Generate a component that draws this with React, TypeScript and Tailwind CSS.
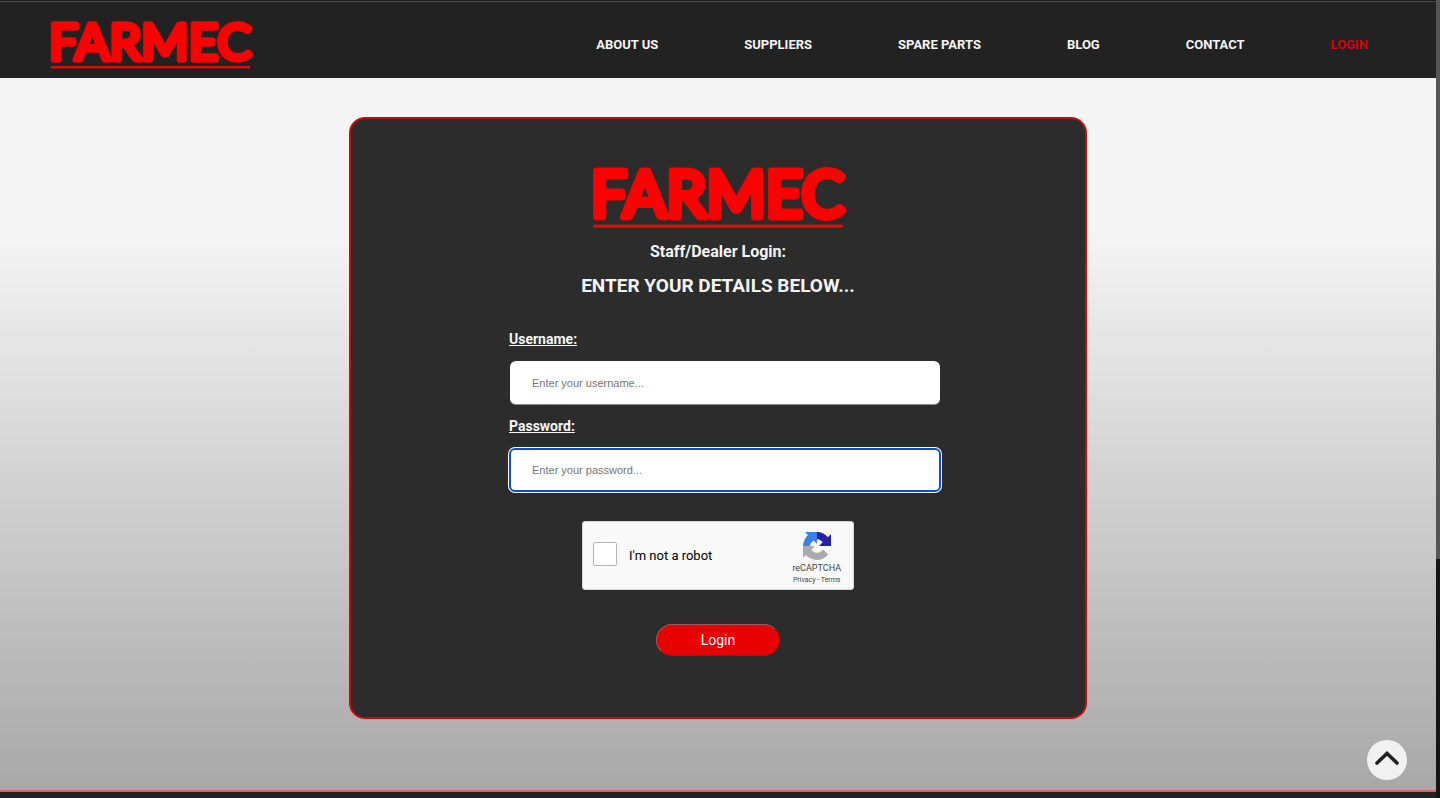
import React from "react";

const navItems = [
  { label: "ABOUT US", href: "#about" },
  { label: "SUPPLIERS", href: "#suppliers" },
  { label: "SPARE PARTS", href: "#spare-parts" },
  { label: "BLOG", href: "#blog" },
  { label: "CONTACT", href: "#contact" },
  { label: "LOGIN", href: "#login", active: true },
];

function Logo({ className }: { className: string }) {
  return (
    <svg viewBox="0 0 201 49" className={`overflow-visible ${className}`} role="img" aria-label="Farmec">
      <text
        x="-1"
        y="40"
        fontSize="51"
        fontWeight="400"
        fill="#fe0000"
        stroke="#fe0000"
        strokeWidth="5.6"
        strokeLinejoin="round"
        strokeLinecap="round"
        className="font-['Lato',sans-serif]"
      >
        FARMEC
      </text>
      <rect x="1" y="46" width="199" height="2.4" fill="#e60a0a" />
    </svg>
  );
}

function RecaptchaMark() {
  return (
    <svg viewBox="0 0 64 64" className="size-7" aria-hidden="true">
      <path
        fill="#2420a8"
        d="M64 31.955l-.033-1.37V4.687l-7.16 7.16C50.948 4.674 42.033.093 32.05.093c-10.4 0-19.622 4.96-25.458 12.64l11.736 11.86a15.55 15.55 0 0 1 4.754-5.334c2.05-1.6 4.952-2.906 8.968-2.906.485 0 .86.057 1.135.163 4.976.393 9.288 3.14 11.828 7.124l-8.307 8.307L64 31.953"
      />
      <path
        fill="#3d80f2"
        d="M31.862.094l-1.37.033H4.594l7.16 7.16C4.58 13.147 0 22.06 0 32.046c0 10.4 4.96 19.622 12.64 25.458L24.5 45.768a15.55 15.55 0 0 1-5.334-4.754c-1.6-2.05-2.906-4.952-2.906-8.968 0-.485.057-.86.163-1.135.393-4.976 3.14-9.288 7.124-11.828l8.307 8.307L31.86.095"
      />
      <path
        fill="#ababab"
        d="M.001 32.045l.033 1.37v25.898l7.16-7.16c5.86 7.173 14.774 11.754 24.76 11.754 10.4 0 19.622-4.96 25.458-12.64l-11.736-11.86a15.55 15.55 0 0 1-4.754 5.334c-2.05 1.6-4.952 2.906-8.968 2.906-.485 0-.86-.057-1.135-.163-4.976-.393-9.288-3.14-11.828-7.124l8.307-8.307c-10.522.04-22.4.066-27.295-.005"
      />
    </svg>
  );
}

function Header() {
  return (
    <header className="flex h-[77px] items-center justify-between border-t border-[#4a4a4a] bg-[#222222] pt-2 pr-[68px] pl-[50px]">
      <a href="#home">
        <Logo className="w-[201px]" />
      </a>
      <nav className="flex gap-[86px] pt-0.5">
        {navItems.map((item) => (
          <a
            key={item.label}
            href={item.href}
            className={`text-[13px] font-bold whitespace-nowrap ${item.active ? "text-[#cc0808]" : "text-[#f4f4f4]"}`}
          >
            {item.label}
          </a>
        ))}
      </nav>
    </header>
  );
}

function LoginCard() {
  return (
    <section className="flex w-full max-w-[738px] flex-col items-center rounded-2xl border-2 border-[#cc0a0a] bg-[#2c2c2c] pt-12 pb-[61px] text-[#f4f4f4]">
      <Logo className="w-[252px]" />
      <h2 className="mt-3 text-base leading-6 font-bold">Staff/Dealer Login:</h2>
      <h1 className="mt-2 text-[19px] leading-7 font-bold">ENTER YOUR DETAILS BELOW...</h1>
      <form className="mt-[27px] flex w-full flex-col items-center" onSubmit={(e) => e.preventDefault()}>
        <div className="ml-[14px] flex w-[432px] flex-col">
          <label htmlFor="username" className="text-sm leading-6 font-bold underline">
            Username:
          </label>
          <input
            id="username"
            type="text"
            placeholder="Enter your username..."
            className="mx-px mt-[10px] h-11 rounded-md border-b border-[#8a8a8a] bg-white px-[22px] font-['Liberation_Sans',sans-serif] text-[11px] text-black outline-none placeholder:text-[#757575]"
          />
          <label htmlFor="password" className="mt-[9px] text-sm leading-6 font-bold underline">
            Password:
          </label>
          <input
            id="password"
            type="password"
            placeholder="Enter your password..."
            className="mt-[10px] h-11 rounded-md border-2 border-[#0b4fc0] bg-white px-[21px] font-['Liberation_Sans',sans-serif] text-[11px] text-black ring-1 ring-white outline-none placeholder:text-[#757575]"
          />
        </div>
        <div className="mt-[29px] flex h-[69px] w-[272px] items-center justify-between rounded-[3px] border border-[#d6d6d6] bg-[#f9f9f9] pr-3 pl-[10px] text-black">
          <div className="flex items-center gap-3">
            <input
              id="robot"
              type="checkbox"
              className="mb-1 size-6 appearance-none rounded-xs border border-[#b5b5b5] bg-white"
            />
            <label htmlFor="robot" className="text-[13px]">
              I'm not a robot
            </label>
          </div>
          <div className="flex flex-col items-center pt-1 text-[#444444]">
            <RecaptchaMark />
            <span className="text-[9px] leading-4">reCAPTCHA</span>
            <span className="text-[7px] leading-2">
              <a href="#privacy">Privacy</a> - <a href="#terms">Terms</a>
            </span>
          </div>
        </div>
        <button
          type="submit"
          className="mt-[34px] h-8 w-[124px] rounded-full border border-t-[#9a5a5a] border-r-[#b01010] border-b-[#b01010] border-l-[#9a5a5a] bg-[#e90000] text-sm text-white"
        >
          Login
        </button>
      </form>
    </section>
  );
}

export default function App() {
  return (
    <div className="flex min-h-screen bg-[#222222] font-['Roboto',sans-serif]">
      <div className="flex min-w-0 flex-1 flex-col border-t border-[#1a1a1a]">
        <Header />
        <main className="flex flex-1 items-start justify-center bg-linear-to-b from-[#f4f4f4] from-[22%] to-[#a8a8a8] pt-[39px] pb-[70px]">
          <LoginCard />
        </main>
        <footer className="h-2 border-t-2 border-[#e06060] bg-[#222222]" />
      </div>
      <div className="flex w-1 flex-col bg-[#151515]" aria-hidden="true">
        <div className="basis-[70%] bg-[#555555]" />
      </div>
      <button
        type="button"
        aria-label="Back to top"
        className="fixed right-[33px] bottom-[18px] flex size-10 items-center justify-center rounded-full bg-[#f1f1f1] pb-1"
      >
        <svg viewBox="0 0 24 16" className="w-6" fill="none" stroke="#222222" strokeWidth="3.6" aria-hidden="true">
          <path d="M2 13 12 3.4l10 9.6" strokeLinecap="round" strokeLinejoin="miter" />
        </svg>
      </button>
    </div>
  );
}
